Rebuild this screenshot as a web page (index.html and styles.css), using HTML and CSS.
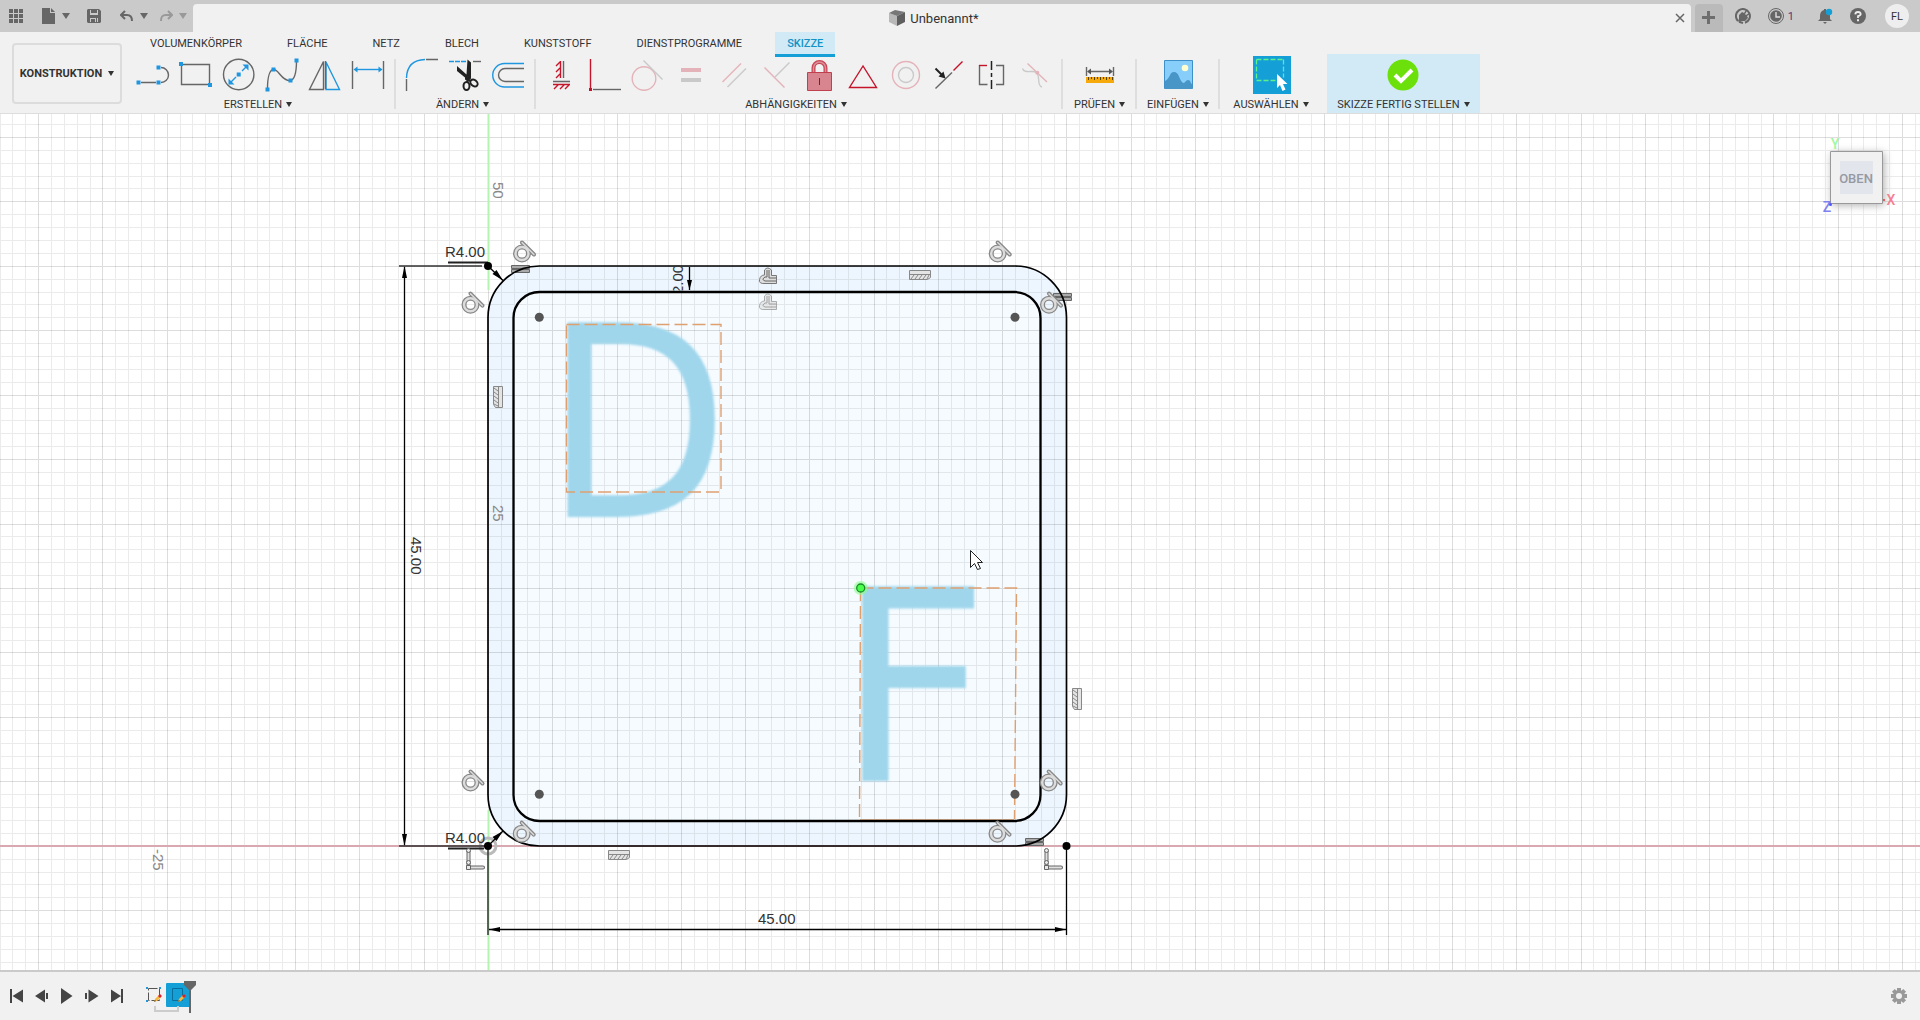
FILE: index.html
```html
<!DOCTYPE html>
<html lang="de">
<head>
<meta charset="utf-8">
<title>Unbenannt*</title>
<link rel="stylesheet" href="styles.css">
</head>
<body>
<header class="titlebar">
  <div class="quick">
    <button class="qbtn" aria-label="Datengruppe"><svg width="14" height="14" fill="#666"><path d="M0 0h4v4H0zM5 0h4v4H5zM10 0h4v4h-4zM0 5h4v4H0zM5 5h4v4H5zM10 5h4v4h-4zM0 10h4v4H0zM5 10h4v4H5zM10 10h4v4h-4z"/></svg></button>
    <button class="qbtn qfile" aria-label="Datei"><svg width="14" height="16" fill="#666"><path d="M0 0h8v5h5v11H0zM9 0l4 4H9z"/></svg><i class="caret big"></i></button>
    <button class="qbtn qsave" aria-label="Speichern"><svg width="14" height="14"><path fill="#666" d="M1 0h11l2 2v11l-1 1H1l-1-1V1z"/><path fill="#cacaca" d="M3 1h8v5H3zM3 9h8v4H3z"/><path fill="#666" d="M4 0h6v4H4zM4 10h4v4H4zM9 9h1v5H9z"/></svg></button>
    <button class="qbtn qundo" aria-label="Rückgängig"><svg width="14" height="12" fill="none" stroke="#666" stroke-width="2"><path d="M5 1L1 5l4 4M1 5h6c4 0 5 2 5 6"/></svg><i class="caret big"></i></button>
    <button class="qbtn qredo" aria-label="Wiederherstellen" disabled><svg width="14" height="12" fill="none" stroke="#999" stroke-width="2"><path d="M9 1l4 4-4 4M13 5H7C3 5 2 7 2 11"/></svg><i class="caret big pale"></i></button>
  </div>
  <div class="doc">
    <div class="doc-title">
      <svg width="17" height="16"><path fill="#b8b8b8" d="M0 3l8 3v10l-8-4z"/><path fill="#777" d="M0 3l6-3 10 2-8 4z"/><path fill="#5f5f5f" d="M8 6l8-4v10l-8 4z"/></svg>
      <span>Unbenannt*</span>
    </div>
    <button class="close" aria-label="Schließen"><svg width="10" height="10" stroke="#666" stroke-width="1.500"><path d="M1 1l8 8M9 1L1 9"/></svg></button>
  </div>
  <button class="newtab" aria-label="Neu"><svg width="14" height="14" fill="#6e6e6e"><path d="M5 0h3v5h5v3H8v5H5V8H0V5h5z"/></svg></button>
  <div class="status">
    <button class="sbtn" aria-label="Erweiterungen"><svg width="16" height="16" viewBox="0 0 16 16"><path d="M3 13A7 7 0 1 1 10 14.700M8 15L4 13.700" fill="none" stroke="#666" stroke-width="2"/><path fill="#666" d="M4 7l3-3 2 1 2-3 1 1-2 3 1 1 3-2 1 1-3 2 1 2-3 3-4 0-2 1-1-1 1-2z"/></svg></button>
    <button class="sbtn job" aria-label="Auftragsstatus"><svg width="16" height="16" viewBox="0 0 16 16"><circle cx="8" cy="8" r="7.500" fill="none" stroke="#666"/><circle cx="8" cy="8" r="5.800" fill="#666"/><path d="M8 4v5h4" fill="none" stroke="#ddd" stroke-width="1.400"/></svg><span>1</span></button>
    <button class="sbtn bell" aria-label="Benachrichtigungen"><svg width="15" height="17" viewBox="0 0 15 17"><path fill="#666" d="M6 1h2v1q4 1 4 6v3l2 2H0l2-2V8q0-5 4-6zM5 14h4l-2 2z"/><circle cx="11" cy="4" r="3.200" fill="#14a0d6"/></svg></button>
    <button class="sbtn help" aria-label="Hilfe"><svg width="16" height="16" viewBox="0 0 16 16"><circle cx="8" cy="8" r="8" fill="#666"/><path d="M5.300 6.300Q5.500 4 8 4t2.700 2.100Q10.700 7.500 8 8.200V10" fill="none" stroke="#eee" stroke-width="1.800"/><path fill="#eee" d="M7 11.300h2v2H7z"/></svg></button>
    <button class="avatar">FL</button>
  </div>
</header>

<section class="ribbon">
  <button class="workspace">KONSTRUKTION<i class="caret"></i></button>
  <div class="ribbon-main">
    <nav class="tabs">
      <a href="#" class="tab">VOLUMENKÖRPER</a>
      <a href="#" class="tab">FLÄCHE</a>
      <a href="#" class="tab">NETZ</a>
      <a href="#" class="tab">BLECH</a>
      <a href="#" class="tab">KUNSTSTOFF</a>
      <a href="#" class="tab">DIENSTPROGRAMME</a>
      <a href="#" class="tab active">SKIZZE</a>
    </nav>
    <div class="tools">
      <div class="group wide">
        <div class="icons">
          <button class="tool" aria-label="Linie"><svg viewBox="0 0 43 42"><path class="g" d="M9 28.500H24M29 13.500a7.500 7.500 0 0 1 0 15"/><path class="bf" d="M4.500 26.500h4v4h-4zM24.500 26.500h4v4h-4zM24.500 11.500h4v4h-4z"/></svg></button>
          <button class="tool" aria-label="Rechteck"><svg viewBox="0 0 43 42"><path class="g" d="M6.500 10.500h28v20h-28z"/><path class="bf" d="M4 8h4v4H4zM33 29h4v4h-4z"/></svg></button>
          <button class="tool" aria-label="Kreis"><svg viewBox="0 0 43 42"><circle class="g" cx="20.700" cy="20.500" r="15.200"/><path class="b" d="M13 28l5-5M24 17l5-5"/><path class="bf" d="M18.700 18.500h4v4h-4zM30.500 10.500v6l-6-6zM10.500 30.500v-6l6 6z"/></svg></button>
          <button class="tool" aria-label="Spline"><svg viewBox="0 0 43 42"><path class="g" d="M6.500 35C6.500 22 9 15.500 12.700 15.500C18 15.500 20 26.500 29 26.700C34 26 35.500 17 35.500 6.500"/><path class="bf" d="M4.500 33.500h4v4h-4zM10.500 13.500h4v4h-4zM27.500 24.500h4v4h-4zM33.500 4.500h4v4h-4z"/></svg></button>
          <button class="tool" aria-label="Spiegeln"><svg viewBox="0 0 43 42"><path class="g" d="M19.500 7.500v28h-14z"/><path class="b" d="M22 35.500V8l13.500 27.500z"/><path class="g" d="M21.500 7v28"/></svg></button>
          <button class="tool" aria-label="Skizzenbemaßung"><svg viewBox="0 0 43 42"><path class="g" d="M5.500 7v28M36.500 7v28"/><path class="b" d="M8 15.500h26"/><path class="bf" d="M6.500 15.500l4-3v6zM35.500 15.500l-4-3v6z"/></svg></button>
        </div>
        <button class="label">ERSTELLEN<i class="caret"></i></button>
      </div>
      <hr class="sep">
      <div class="group wide">
        <div class="icons">
          <button class="tool" aria-label="Abrunden"><svg viewBox="0 0 43 42"><path class="b" d="M5.500 24Q6 6 24 5.500"/><path class="g" d="M5.500 25v12M25 5.500h12"/></svg></button>
          <button class="tool" aria-label="Stutzen"><svg viewBox="0 0 43 42"><path class="b" d="M5 7.500h17" stroke-dasharray="5 1"/><path class="g" d="M29 7.500h8"/><path fill="#222" d="M23.500 5.500l3.500 3v16l-3 3-3-2v-2l-8-6.500v-5l9.500 8.500z"/><g fill="none" stroke="#222" stroke-width="2"><ellipse cx="22.500" cy="32" rx="3" ry="4"/><ellipse cx="30" cy="29" rx="4" ry="3" transform="rotate(40 30 29)"/><path d="M23 28l1-2 3 1"/></g></svg></button>
          <button class="tool" aria-label="Versatz"><svg viewBox="0 0 43 42"><path class="b" d="M37 9.500H17.500a11.700 11.700 0 0 0 0 23.500H37"/><path class="g" d="M37 14.500H18a6.500 6.500 0 0 0 0 13H37"/></svg></button>
        </div>
        <button class="label">ÄNDERN<i class="caret"></i></button>
      </div>
      <hr class="sep">
      <div class="group wide">
        <div class="icons">
          <button class="tool" aria-label="Horizontal/Vertikal"><svg viewBox="0 0 43 42"><path class="g" d="M22.500 7v17M12 27.500h17"/><path class="r" d="M19.500 7v17M19 8l-4 4M19 14l-4 4M19 20l-4 4M12 30.500h17M17 31l-4 4M23 31l-4 4M28 31l-4 4"/></svg></button>
          <button class="tool" aria-label="Koinzident"><svg viewBox="0 0 43 42"><path class="r" d="M6.500 5v29"/><path fill="#c4152b" d="M5 34h3v3H5z"/><path class="g" d="M9 35.500h28"/></svg></button>
          <button class="tool off" aria-label="Tangential" disabled><svg viewBox="0 0 43 42"><circle class="r" cx="17" cy="24.500" r="11.800"/><path class="g" d="M16.500 6.500l19 19"/></svg></button>
          <button class="tool off" aria-label="Gleich" disabled><svg viewBox="0 0 43 42"><path fill="#c4152b" d="M11 14h20v4H11z"/><path fill="#666" d="M11 24h20v4H11z"/></svg></button>
          <button class="tool off" aria-label="Parallel" disabled><svg viewBox="0 0 43 42"><path class="r" d="M9.500 28L28 9.500"/><path class="g" d="M14.500 33L33 14.500"/></svg></button>
          <button class="tool off" aria-label="Lotrecht" disabled><svg viewBox="0 0 43 42"><path class="r" d="M8.500 13.500l20 20"/><path class="g" d="M33.500 8.500L19 23"/></svg></button>
          <button class="tool" aria-label="Fixieren"><svg viewBox="0 0 43 42"><path d="M14.500 19v-5a6 6 0 0 1 12 0v5" fill="none" stroke="#c94655" stroke-width="4"/><path d="M14.500 19v-5a6 6 0 0 1 12 0v5" fill="none" stroke="#dc9099" stroke-width="1.500"/><path d="M8.500 18.500h24v18h-24z" fill="#d98590" stroke="#c0404f"/><path d="M20.500 24v7" stroke="#7d1f2a"/></svg></button>
          <button class="tool" aria-label="Mittelpunkt"><svg viewBox="0 0 43 42"><path class="r" d="M21 12L7.500 33.500h27z"/></svg></button>
          <button class="tool off" aria-label="Konzentrisch" disabled><svg viewBox="0 0 43 42"><circle class="r" cx="21" cy="21" r="13.500"/><circle class="g" cx="21" cy="21" r="7.500"/></svg></button>
          <button class="tool" aria-label="Kollinear"><svg viewBox="0 0 43 42"><path class="g" d="M7.500 34.500L24 18.500"/><path class="r" d="M25.500 16.500L34.500 7.500"/><path fill="none" stroke="#222" stroke-width="2" d="M7.500 14.500l7 7"/><path fill="#222" d="M17.500 24.500l-7-2 5-5z"/></svg></button>
          <button class="tool" aria-label="Symmetrie"><svg viewBox="0 0 43 42"><path class="g" d="M8.500 11v19.500h8M25 30.500h7.500v-19H25"/><path class="r" d="M8 11.500h8"/><path d="M20.500 7v28" fill="none" stroke="#222" stroke-width="1.500" stroke-dasharray="9 3 4 3 9"/></svg></button>
          <button class="tool off" aria-label="Krümmung" disabled><svg viewBox="0 0 43 42"><path class="r" d="M13.500 9.500L33 28"/><path class="g" d="M8.500 14.500c2 6 10 1 14 4s0 14 5.500 14.500"/><circle cx="23.300" cy="18.700" r="2" fill="#c4152b"/></svg></button>
        </div>
        <button class="label">ABHÄNGIGKEITEN<i class="caret"></i></button>
      </div>
      <hr class="sep">
      <div class="group g-check">
        <button class="tool" aria-label="Messen"><svg viewBox="0 0 43 42"><path class="g" d="M8.500 13v9M35.500 13v9M11 17.500h22"/><path fill="#555" d="M9 17.500l4-3v6zM35 17.500l-4-3v6z"/><path fill="#f5a90a" d="M8 23h28v6H8z"/><path stroke="#5a4200" d="M10.500 23v3M13.500 23v2M16.500 23v3M19.500 23v2M22.500 23v3M25.500 23v2M28.500 23v3M31.500 23v2M34.500 23v3"/></svg></button>
        <button class="label">PRÜFEN<i class="caret"></i></button>
      </div>
      <hr class="sep">
      <div class="group g-insert">
        <button class="tool" aria-label="Bild einfügen"><svg viewBox="0 0 43 42"><path fill="#87cefa" stroke="#3f8fc8" d="M7.500 6.500h28v28h-28z"/><path fill="#4896c8" d="M8 27c6-3 4-9 9-9s5 7 8 10 3-2 6-2 2 3 4 4v5H8z"/><circle cx="28" cy="14" r="3.300" fill="#ffffd0"/></svg></button>
        <button class="label">EINFÜGEN<i class="caret"></i></button>
      </div>
      <hr class="sep">
      <div class="group g-select">
        <button class="tool" aria-label="Auswählen"><svg viewBox="0 0 43 42"><path fill="#14a0d6" d="M3 2h38v38H3z"/><path fill="none" stroke="#5df08c" stroke-width="1.300" stroke-dasharray="5 2" d="M6.500 5.500h27M6.500 5.500v21h20"/><path fill="none" stroke="#5adff0" stroke-width="1.300" stroke-dasharray="5 2" d="M33.500 5.500v18"/><path fill="#fff" d="M27 20v14l3-3 2.500 6 3-1.500-2.500-5.500h4.500z"/></svg></button>
        <button class="label">AUSWÄHLEN<i class="caret"></i></button>
      </div>
      <div class="group finish">
        <button class="tool" aria-label="Skizze fertig stellen"><svg viewBox="0 0 43 42"><circle cx="21" cy="21" r="15.500" fill="#6be00a"/><path fill="none" stroke="#fff" stroke-width="4" d="M13 21l6 6L30 16"/></svg></button>
        <button class="label">SKIZZE FERTIG STELLEN<i class="caret"></i></button>
      </div>
    </div>
  </div>
</section>

<main class="viewport">
  <svg class="sketch" viewBox="0 114 1920 856" preserveAspectRatio="xMidYMid slice">
    <defs>
      <g id="tangent" fill="none">
        <g stroke="#888" stroke-width="5"><circle r="6.500"/><path stroke-width="4" stroke-linecap="round" d="M0-11L12 1"/></g>
        <g stroke="#dcdcdc" stroke-width="2.400"><circle r="6.500"/><path stroke-width="1.400" stroke-linecap="round" d="M0-11L12 1"/></g>
      </g>
      <g id="horiz" fill="#e4e4e4" stroke="#888"><path d="M.5.500h21v7l-3 2H.5z"/><path d="M1 4.500h20M5 5L2 9M9 5L6 9M13 5l-3 4M17 5l-3 4M20 5l-2 4"/></g>
      <g id="vert" fill="#e4e4e4" stroke="#888"><path d="M9.500.500v21h-7l-2-3V.500z"/><path d="M5.500 1v20M5 5L1 2M5 9L1 6M5 13l-4-3M5 17l-4-3M5 20l-4-2"/></g>
      <g id="perp" fill="none"><path fill="#ddd" stroke="#777" d="M6 16.500h11.500v-8h-5V3q-4-4-7 0v5q-4 0-5 4.500t5.500 4z"/><path stroke="#666" d="M8 3v7M10 3v8h7M8 10H6q-4 2.500 0 4h11"/></g>
      <g id="joint" fill="none"><path stroke="#666" stroke-width="4" stroke-linecap="round" d="M3.500 3v16M4 19.500h14"/><path stroke="#e0e0e0" stroke-width="2" stroke-linecap="round" d="M3.500 3v16M4 19.500h14"/><g fill="#e8e8e8" stroke="#666"><circle cx="3.500" cy="2.500" r="2"/><circle cx="3.500" cy="14.500" r="2"/><path d="M1.500 17.500h4v4h-4z"/></g></g>
      <g id="equal" stroke="#666" fill="#aaa"><path d="M.5.500h18v3H.5zM.5 4.500h18v3H.5z"/></g>
      <clipPath id="gap"><path d="M665 262h24v28.500h-24z"/></clipPath>
    </defs>
    <rect x="488" y="266" width="578.500" height="580" rx="51.400" fill="#edf6fe"/>
    <rect x="513.500" y="292" width="527" height="529" rx="26" fill="#f5fbff"/>
    <g class="grid"></g>
    <path d="M-2000 846H4000" stroke="#d9a9b1" stroke-width="2"/>
    <path d="M488.500-1000V290M488.500 810V3000" stroke="#b4f4b0" stroke-width="2"/>
    <circle cx="488" cy="846" r="8" fill="none" stroke="#bbb" stroke-width="3"/>

    <g class="letters"><text x="544" y="517" class="narrow">D</text><text x="836" y="781">F</text></g>

    <rect x="566.500" y="324.500" width="154.500" height="167.500" class="frame"/>
    <path class="frame" d="M860.500 588H1016.500L1014.500 819M860.500 588L859.500 819"/>
    <path d="M860 819.500H1014" stroke="#ecc09a"/>

    <use href="#equal" x="511" y="265"/><use href="#equal" x="1053" y="293"/><use href="#equal" x="1025" y="838"/>
    <g fill="none" stroke="#000">
      <rect x="488" y="266" width="578.500" height="580" rx="51.400" stroke-width="1.700"/>
      <rect x="513.500" y="292" width="527" height="529" rx="26" stroke-width="2.300"/>
    </g>

    <g fill="none" stroke="#333" stroke-width="1.500">
      <path d="M399 266H482M399 846H488M488 850V935"/>
      <path stroke="#000" stroke-width="1.300" d="M404.500 267V845M1066.500 850V935M489 929.500H1066M689.500 267V290M488 266L503 280.500M488 846L503 831"/>
      <path stroke="#222" stroke-width="2" d="M448 262.500H488M448 848.500H484"/>
    </g>
    <path d="M404.500 266l2.500 12h-5zM404.500 846l2.500-12h-5zM489 929.500l11-2.500v5zM1066 929.500l-11-2.500v5zM689.500 290l-2.500-10h5zM503 280.500L492.500 274l4-4zM503 831l-10.500 6 4 4z"/>
    <circle cx="488" cy="266" r="4"/><circle cx="488" cy="846" r="4"/><circle cx="1066.500" cy="846" r="4"/>
    <g fill="#555"><circle cx="539.300" cy="317.300" r="4.500"/><circle cx="1015" cy="317.300" r="4.500"/><circle cx="539.300" cy="794.300" r="4.500"/><circle cx="1015" cy="794.300" r="4.500"/></g>
    <circle cx="860.700" cy="588" r="7" fill="#8f8" opacity=".6"/><circle cx="860.700" cy="588" r="4" fill="#4dff4d" stroke="#1a8a2a" stroke-width="1.300"/>

    <g class="dims">
      <text x="445" y="257">R4.00</text>
      <text x="445" y="843">R4.00</text>
      <text x="758" y="924">45.00</text>
      <text transform="translate(411 537) rotate(90)">45.00</text>
      <g clip-path="url(#gap)"><text transform="translate(683 294) rotate(-90)">2.00</text></g>
    </g>
    <g class="dims ruler">
      <text transform="translate(493 182) rotate(90)">50</text>
      <text transform="translate(493 505) rotate(90)">25</text>
      <text transform="translate(153 849) rotate(90)">-25</text>
    </g>

    <use href="#tangent" x="522" y="253.500"/><use href="#tangent" x="470.500" y="304.700"/><use href="#tangent" x="997.700" y="253.500"/><use href="#tangent" x="1049" y="304.700"/>
    <use href="#tangent" x="470.500" y="782.500"/><use href="#tangent" x="521.700" y="833.700"/><use href="#tangent" x="1048.700" y="782.500"/><use href="#tangent" x="997.500" y="833.700"/>
    <use href="#horiz" x="909" y="270"/><use href="#horiz" x="608" y="850"/>
    <use href="#vert" x="493" y="386"/><use href="#vert" x="1072" y="688"/>
    <use href="#perp" x="759" y="267"/><use href="#perp" x="759" y="293" opacity=".6"/>
    <use href="#joint" x="465" y="848"/><use href="#joint" x="1043" y="848"/>
    <path d="M970.500 550.500v17l4-4 3 6 3-1-3-6h5z" fill="#fff" stroke="#222"/>
  </svg>
  <button class="viewcube" aria-label="Oben">
    <svg width="80" height="80" viewBox="1820 130 80 80">
      <path d="M1832 153h52v52h-52z" class="shade"/>
      <path d="M1830.500 151.500h52v52h-52z" fill="#f1f1f1" stroke="#999"/>
      <path d="M1840 161h33v33h-33z" fill="#e3e5ec"/>
      <text x="1856" y="183" class="face">OBEN</text>
      <text x="1835" y="149" class="axis" fill="#a0f8a0">Y</text>
      <text x="1891" y="205" class="axis" fill="#f57f90">X</text>
      <text x="1827" y="212" class="axis" fill="#8080f0">Z</text>
      <circle cx="1830.500" cy="204.500" r="1.500" fill="#55f"/><circle cx="1884" cy="200" r="1" fill="#e33"/>
    </svg>
  </button>
</main>

<footer class="timeline">
  <div class="player">
    <button class="pbtn" aria-label="Anfang"><svg width="14" height="16"><path d="M0 1h2v14H0zM13 1.500v13L2.500 8z"/></svg></button>
    <button class="pbtn" aria-label="Zurück"><svg width="14" height="16"><path d="M10 1.500v13L0 8zM11 5h2v6h-2z"/></svg></button>
    <button class="pbtn" aria-label="Wiedergabe"><svg width="14" height="16"><path d="M1 0v16l11.500-8z"/></svg></button>
    <button class="pbtn" aria-label="Weiter"><svg width="14" height="16"><path d="M3.500 1.500v13L13.500 8zM0 5h2v6H0z"/></svg></button>
    <button class="pbtn" aria-label="Ende"><svg width="14" height="16"><path d="M11 1h2v14h-2zM1 1.500v13L11 8z"/></svg></button>
  </div>
  <div class="history">
    <svg width="54" height="36" viewBox="0 0 54 36">
      <path fill="#14a0d6" d="M21 4q0-1 1-1h23v24H22q-1 0-1-1z"/>
      <path d="M10 26v5h23v-5" fill="none" stroke="#ccc" stroke-width="2"/>
      <path d="M3.500 8.500h11v12h-11z" fill="none" stroke="#555" stroke-dasharray="9 2"/>
      <path d="M1 7h2v2H1zM14 7h2v2h-2zM1 20h2v2H1z" fill="#1e96e0"/>
      <path d="M27.500 8.500h10v12h-10z" fill="none" stroke="#0a6f9c"/>
      <g id="pencil"><path d="M9 22l1-3 4-4 2 2-4 4z" fill="#f6b73c"/><path d="M13 16l2-2 2 2-2 2z" fill="#d0263c"/><path d="M9 22l1-2 1 1z" fill="#555"/></g>
      <use href="#pencil" x="24"/>
      <path fill="#666" d="M39 1h12v4l-5 5v23h-2V10l-5-5z"/>
    </svg>
  </div>
  <button class="gear" aria-label="Einstellungen"><svg width="16" height="16" viewBox="-8 -8 16 16"><g fill="#999"><path id="t" d="M-2-8h4V8h-4z"/><use href="#t" transform="rotate(45)"/><use href="#t" transform="rotate(90)"/><use href="#t" transform="rotate(135)"/><circle r="6"/></g><circle r="3" fill="#f1f1f1"/></svg></button>
</footer>
<script src="grid.js"></script>
</body>
</html>
```
FILE: grid.js
```js
// Sketch grid: one major line every 5 mm, one minor line every 1 mm, from the origin.
const origin = { x: 488, y: 845.8 };
const step = { x: 64.27 / 5, y: 64.45 / 5 };
const minor = [];
const major = [];
for (let i = -120; i <= 220; i++) {
  const x = Math.round(origin.x + i * step.x) + 0.5;
  const y = Math.round(origin.y + i * step.y) + 0.5;
  (i % 5 ? minor : major).push(`M${x}-1000V3000M-2000 ${y}H4000`);
}
document.querySelector('.grid').innerHTML =
  `<path class="minor" d="${minor.join('')}"/><path class="major" d="${major.join('')}"/>`;
```
FILE: styles.css
```css
* { box-sizing: border-box; }
body {
  margin: 0;
  height: 100vh;
  display: flex;
  flex-direction: column;
  overflow: hidden;
  background: #f1f1f1;
  color: #333;
  font: 11px Roboto, "Liberation Sans", sans-serif;
}
button { border: 0; padding: 0; background: none; font: inherit; color: inherit; }
svg { display: block; }

.caret {
  flex: none;
  width: 0;
  height: 0;
  margin-left: 4px;
  border: 3px solid transparent;
  border-top: 5px solid #333;
  border-bottom: 0;
}
.caret.big { margin-left: 6px; border-width: 6px 4px 0; border-top-color: #666; }
.caret.pale { border-top-color: #999; }

.titlebar { display: flex; height: 32px; background: #cacaca; }
.quick { display: flex; width: 193px; padding-left: 9px; }
.qbtn { display: flex; align-items: center; }
.qfile { margin-left: 19px; }
.qsave { margin-left: 17px; }
.qundo { margin-left: 19px; }
.qredo { margin-left: 11px; }
.doc {
  flex: 1;
  display: flex;
  align-items: center;
  margin-top: 4px;
  padding-right: 6px;
  background: #f1f1f1;
  border-radius: 4px 4px 0 0;
}
.doc-title { flex: 1; display: flex; justify-content: center; gap: 4px; font-size: 13px; line-height: 17px; }
.newtab {
  display: grid;
  place-items: center;
  width: 28px;
  margin: 4px 0 0 4px;
  background: #bababa;
  border-radius: 4px 4px 0 0;
}
.status { display: flex; align-items: center; padding: 0 11px 0 12px; }
.sbtn { display: flex; align-items: center; gap: 4px; }
.job { margin-left: 17px; color: #60307a; }
.bell { margin-left: 24px; }
.help { margin-left: 17px; }
.avatar { width: 24px; height: 24px; margin-left: 19px; border-radius: 50%; background: #eee; }

.ribbon { display: flex; height: 82px; padding-left: 12px; border-bottom: 1px solid #ddd; }
.workspace {
  display: flex;
  align-items: center;
  justify-content: center;
  width: 110px;
  height: 61px;
  margin: 11px 10px 0 0;
  border: 2px solid #dcdcdc;
  border-radius: 4px;
  font-weight: 700;
}
.workspace .caret { margin-left: 6px; }
.tabs { display: flex; gap: 21px; height: 22px; padding-left: 6px; }
.tab { height: 25px; padding: 0 12px; line-height: 23px; color: #333; text-decoration: none; }
.tab.active { background: #d1eaf6; border-bottom: 3px solid #14a0d6; color: #1292c6; font-weight: 500; }
.tools { display: flex; height: 59px; }
.group { display: flex; flex-direction: column; align-items: center; }
.wide .label { margin-right: 6px; }
.icons { display: flex; }
.tool { width: 43px; height: 42px; }
.tool svg { width: 43px; height: 42px; }
.off { opacity: .28; }
.label { display: flex; align-items: center; height: 16px; white-space: nowrap; }
.sep { flex: none; width: 2px; height: 50px; margin: 5px 5px 0 4px; border: 0; background: #dedede; }
.g-check { width: 63px; }
.g-insert { width: 72px; }
.g-select { width: 92px; }
.finish { width: 153px; margin-left: 10px; background: #d1eaf6; }

.g, .b, .r { fill: none; stroke-width: 1.4; }
.g { stroke: #666; }
.b { stroke: #1e96e0; }
.r { stroke: #c4152b; }
.bf { fill: #1e96e0; }

.viewport { flex: 1; min-height: 0; position: relative; background: #fff; }
.sketch { width: 100%; height: 100%; }
.minor { stroke: #000; opacity: .075; }
.major { stroke: #000; opacity: .13; }
.frame { fill: none; stroke: #dfa070; stroke-width: 1.4; stroke-dasharray: 13 5; }
.letters { font: 267px "DejaVu Sans", sans-serif; fill: #9fd6ec; filter: blur(1px); }
.narrow { font-family: "DejaVu Sans Condensed", "DejaVu Sans", sans-serif; font-stretch: condensed; }
.dims { font: 15px "Liberation Sans", sans-serif; fill: #333; }
.ruler { fill: #888; }
.viewcube { position: absolute; top: 16px; right: 20px; }
.viewcube svg { overflow: visible; }
.shade { fill: #aaa; filter: blur(4px); }
.face { font: 500 13px Roboto, sans-serif; fill: #9599a3; text-anchor: middle; }
.axis { font: 500 14px Roboto, sans-serif; text-anchor: middle; }

.timeline {
  display: flex;
  align-items: center;
  height: 50px;
  padding: 0 13px 0 10px;
  border-top: 2px solid #cacaca;
}
.player { display: flex; gap: 11px; fill: #444; }
.history { margin: 3px auto 0 21px; }
```
